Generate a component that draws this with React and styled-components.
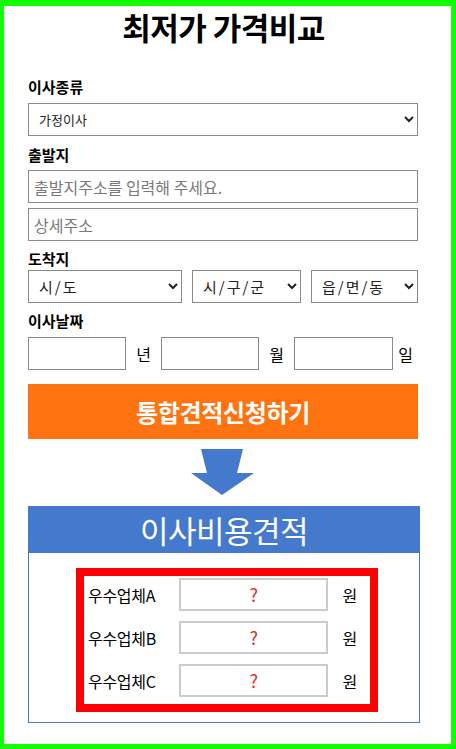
import React from 'react';
import styled, { createGlobalStyle } from 'styled-components';

const GlobalStyle = createGlobalStyle`
  * { box-sizing: border-box; }
  html, body { margin: 0; padding: 0; background: #fff; }
  body { font-family: "Noto Sans CJK KR", "Noto Sans", sans-serif; color: #000; }
`;

const Frame = styled.div`
  width: 456px;
  height: 749px;
  border-style: solid;
  border-color: #11ff00;
  border-width: 6px 5px 5px 4px;
  background: #fff;
  overflow: hidden;
`;

const Title = styled.h1`
  margin: 0;
  height: 44px;
  line-height: 42px;
  text-align: center;
  font-size: 31px;
  font-weight: 700;
  letter-spacing: -0.5px;
  padding-right: 8px;
`;

const Form = styled.div`
  width: 392px;
  margin: 27px 0 0 24px;
  display: flex;
  flex-direction: column;
`;

const Label = styled.div`
  height: 20px;
  line-height: 20px;
  font-size: 15px;
  font-weight: 700;
  margin-top: ${(p) => p.$mt || 0}px;
  margin-bottom: ${(p) => p.$mb || 0}px;
`;

const Select = styled.select`
  height: 33px;
  width: ${(p) => p.$w || '390px'};
  border: 1px solid #8a8a8a;
  border-radius: 0;
  background: #fff;
  font-family: inherit;
  font-size: ${(p) => p.$fs || 13}px;
  letter-spacing: ${(p) => p.$ls || 0}px;
  padding: 0 6px;
  color: #222;
  outline: none;
`;

const TextInput = styled.input`
  width: 390px;
  height: 33px;
  border: 1px solid #8a8a8a;
  padding: 0 5px;
  font-family: inherit;
  font-size: 16px;
  margin-bottom: 5px;
  outline: none;
  &::placeholder { color: #7a7a7a; }
`;

const Row = styled.div`
  display: flex;
  align-items: center;
  justify-content: space-between;
  width: 390px;
`;

const DateInput = styled.input`
  width: ${(p) => p.$w}px;
  height: 33px;
  border: 1px solid #8a8a8a;
  outline: none;
`;

const Unit = styled.span`
  font-size: 16px;
  width: ${(p) => p.$w}px;
  text-align: center;
`;

const SubmitButton = styled.button`
  margin-top: 14px;
  width: 390px;
  height: 55px;
  border: none;
  background: #ff7410;
  color: #fff;
  font-family: inherit;
  font-size: 24px;
  font-weight: 700;
  letter-spacing: -0.3px;
  cursor: pointer;
`;

const ArrowWrap = styled.div`
  margin-top: 10px;
  height: 47px;
  padding-left: 163px;
`;

const EstimateBox = styled.div`
  margin-top: 10px;
  width: 392px;
  height: 217px;
  border: 1px solid #4479ce;
`;

const EstimateHeader = styled.div`
  height: 46px;
  background: #4479ce;
  color: #fff;
  font-size: 31px;
  line-height: 46px;
  text-align: center;
  letter-spacing: -0.5px;
`;

const RedBox = styled.div`
  margin: 15px 0 0 47px;
  width: 302px;
  height: 144px;
  border: 8px solid #ff0000;
  padding: 2px 0 0 4px;
  display: flex;
  flex-direction: column;
  gap: 10px;
`;

const PriceRow = styled.div`
  display: grid;
  grid-template-columns: 91px 149px 37px;
  align-items: center;
  height: 33px;
  font-size: 16px;
  letter-spacing: -0.3px;
`;

const PriceBox = styled.div`
  height: 33px;
  border: 2px solid #cccccc;
  color: #d93030;
  font-size: 18px;
  line-height: 29px;
  text-align: center;
`;

const Won = styled.span`
  text-align: right;
  padding-right: 8px;
`;

const DownArrow = () => (
  <svg width="64" height="47" viewBox="0 0 64 47">
    <polygon points="10,0 52,0 46,24 63,24 31,46 0,24 16,24" fill="#4479ce" />
  </svg>
);

const vendors = ['우수업체A', '우수업체B', '우수업체C'];

export default function App() {
  return (
    <>
      <GlobalStyle />
      <Frame>
        <Title>최저가 가격비교</Title>
        <Form>
          <Label $mb={6}>이사종류</Label>
          <Select defaultValue="가정이사">
            <option>가정이사</option>
            <option>사무실이사</option>
            <option>원룸이사</option>
          </Select>

          <Label $mt={9} $mb={5}>출발지</Label>
          <TextInput placeholder="출발지주소를 입력해 주세요." />
          <TextInput placeholder="상세주소" />

          <Label $mt={3} $mb={1}>도착지</Label>
          <Row>
            <Select $w="154px" $fs={15} $ls={2}>
              <option>시/도</option>
            </Select>
            <Select $w="109px" $fs={15} $ls={2}>
              <option>시/구/군</option>
            </Select>
            <Select $w="107px" $fs={15} $ls={2}>
              <option>읍/면/동</option>
            </Select>
          </Row>

          <Label $mt={8} $mb={6}>이사날짜</Label>
          <Row>
            <DateInput $w={98} />
            <Unit $w={35}>년</Unit>
            <DateInput $w={98} />
            <Unit $w={35}>월</Unit>
            <DateInput $w={99} />
            <Unit $w={25}>일</Unit>
          </Row>

          <SubmitButton>통합견적신청하기</SubmitButton>

          <ArrowWrap>
            <DownArrow />
          </ArrowWrap>

          <EstimateBox>
            <EstimateHeader>이사비용견적</EstimateHeader>
            <RedBox>
              {vendors.map((v) => (
                <PriceRow key={v}>
                  <span>{v}</span>
                  <PriceBox>?</PriceBox>
                  <Won>원</Won>
                </PriceRow>
              ))}
            </RedBox>
          </EstimateBox>
        </Form>
      </Frame>
    </>
  );
}
